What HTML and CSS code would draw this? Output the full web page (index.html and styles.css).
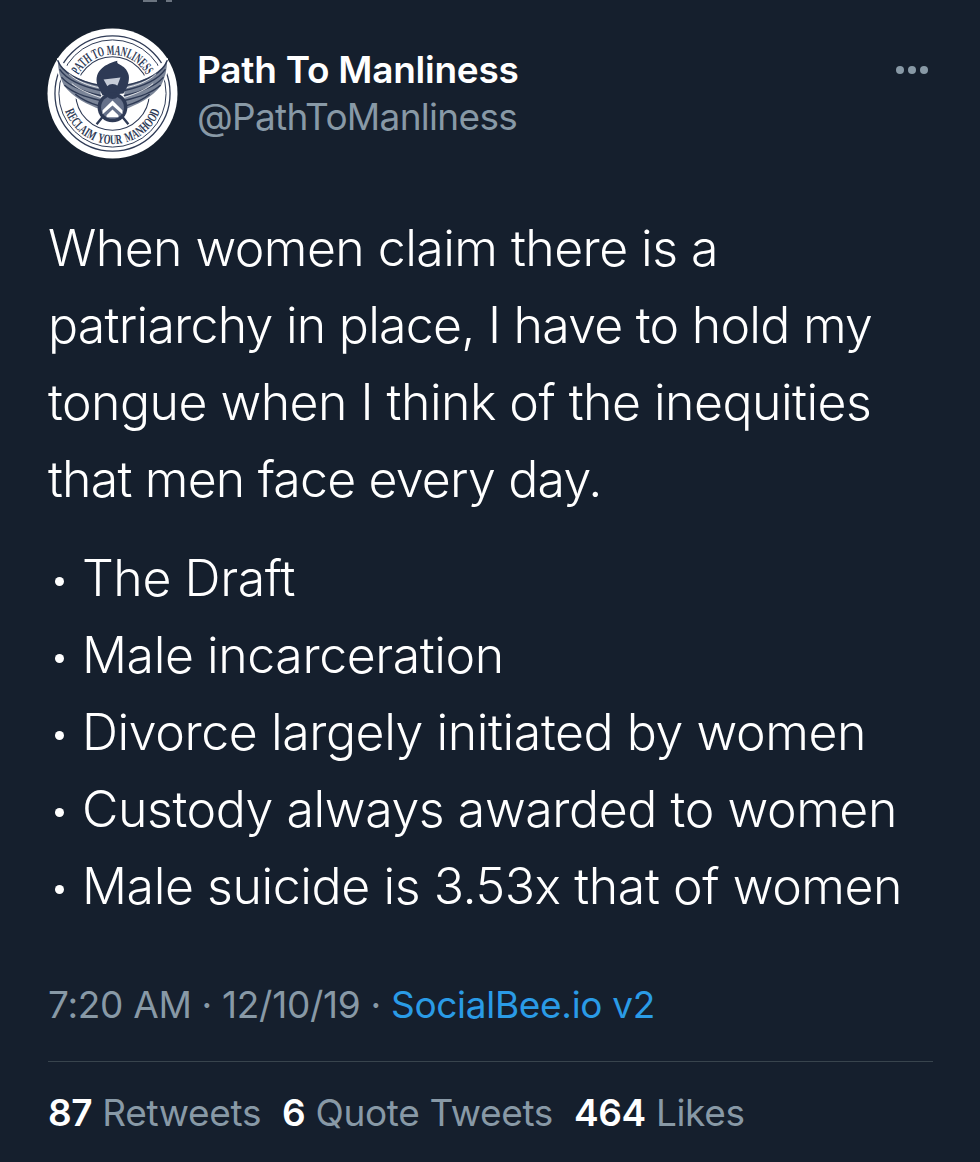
FILE: index.html
```html
<!DOCTYPE html>
<html lang="en">
<head>
<meta charset="utf-8">
<title>Tweet</title>
<link rel="stylesheet" href="styles.css">
</head>
<body>
<main class="tweet">
  <div class="status-sliver"><i></i><i></i></div>
  <header class="head">
    <svg class="avatar" viewBox="0 0 132 132" aria-label="Path To Manliness logo">
      <defs>
        <path id="arcTop" d="M 27 66 A 39 39 0 0 1 105 66"/>
        <path id="arcBot" d="M 15 66 A 51 51 0 0 0 117 66"/>
      </defs>
      <circle cx="66" cy="66" r="65.5" fill="#fff"/>
      <g fill="none" stroke="#2e3a55">
        <circle cx="66" cy="66" r="58" stroke-width="1.3"/>
        <circle cx="66" cy="66" r="54" stroke-width="1"/>
        <circle cx="66" cy="66" r="37" stroke-width="1.1"/>
      </g>
      <text class="logo-text"><textPath href="#arcTop" startOffset="50%" text-anchor="middle" textLength="84" lengthAdjust="spacingAndGlyphs">PATH TO MANLINESS</textPath></text>
      <text class="logo-text logo-text-low"><textPath href="#arcBot" startOffset="50%" text-anchor="middle" textLength="124" lengthAdjust="spacingAndGlyphs">RECLAIM YOUR MANHOOD</textPath></text>
      <g fill="#fff">
        <path d="M10 30 L30 46 L52 56 L56 88 L40 79 L18 63 L11 46 Z"/>
        <path d="M122 30 L102 46 L80 56 L76 88 L92 79 L114 63 L121 46 Z"/>
      </g>
      <g fill="#7b8598">
        <path d="M11 33 C18 46 36 54 54 58 L54 82 C42 78 26 70 17 58 C13 50 11 42 11 33 Z"/>
        <path d="M121 33 C114 46 96 54 78 58 L78 82 C90 78 106 70 115 58 C119 50 121 42 121 33 Z"/>
      </g>
      <g fill="none" stroke="#2e3a55" stroke-linecap="round" stroke-width="1.5">
        <path d="M11 33 C15 45 32 54 54 58"/>
        <path d="M13 42 C19 51 34 59 54 63"/>
        <path d="M15 50 C23 59 36 64 54 68"/>
        <path d="M18 58 C27 66 40 70 54 73"/>
        <path d="M29 67 C36 73 44 76 54 79"/>
        <path d="M121 33 C117 45 100 54 78 58"/>
        <path d="M119 42 C113 51 98 59 78 63"/>
        <path d="M117 50 C109 59 96 64 78 68"/>
        <path d="M114 58 C105 66 92 70 78 73"/>
        <path d="M103 67 C96 73 88 76 78 79"/>
      </g>
      <g fill="none" stroke="#fff" stroke-width="0.8">
        <path d="M22 46 C30 54 42 58 54 60.500"/>
        <path d="M25 56 C32 62 42 66 54 70"/>
        <path d="M110 46 C102 54 90 58 78 60.500"/>
        <path d="M107 56 C100 62 90 66 78 70"/>
      </g>
      <path d="M50 97 L59 86 M82 97 L73 86" stroke="#2e3a55" stroke-width="2.4" fill="none"/>
      <path d="M51 58 C47 46 55 37 71 33 C69 37 78 37 81 44 C84 49 82 55 81 59 L77 66 L56 68 Z" fill="#2e3a55"/>
      <path d="M57 52 L74 50 L71 58 L61 59 Z" fill="#c6ccd8"/>
      <circle cx="66" cy="80" r="15" fill="#2e3a55"/>
      <circle cx="66" cy="80" r="11.5" fill="#66718a"/>
      <path d="M56 83 L66 73 L76 83 L76 87 L66 78 L56 87 Z" fill="#fff"/>
      <path d="M60 88 L66 82 L72 88 L72 90 L60 90 Z" fill="#fff"/>
      <circle cx="66" cy="64" r="6" fill="none" stroke="#2e3a55" stroke-width="3.2"/>
    </svg>
    <div class="names">
      <div class="name">Path To Manliness</div>
      <div class="handle">@PathToManliness</div>
    </div>
    <div class="more" aria-label="More"><i></i><i></i><i></i></div>
  </header>
  <p class="body-text"><span class="line-a">When women claim there is a</span><br><span class="line-b">patriarchy in place, I have to hold my</span><br><span class="line-c">tongue when I think of the inequities</span><br><span class="line-d">that men face every day.</span></p>
  <ul class="list">
    <li>The Draft</li>
    <li>Male incarceration</li>
    <li>Divorce largely initiated by women</li>
    <li>Custody always awarded to women</li>
    <li>Male suicide is 3.53x that of women</li>
  </ul>
  <div class="meta">7:20 AM · 12/10/19 · <a class="source">SocialBee.io v2</a></div>
  <div class="stats">
    <span><b>87</b> Retweets</span>
    <span><b>6</b> Quote Tweets</span>
    <span><b>464</b> Likes</span>
  </div>
</main>
</body>
</html>
```

FILE: styles.css
```css
* { box-sizing: border-box; }
html, body { margin: 0; padding: 0; }
body {
  width: 980px;
  height: 1162px;
  overflow: hidden;
  background: #151f2d;
  color: #fff;
  font-family: Inter, "Liberation Sans", sans-serif;
}
.tweet { padding: 0 47px; position: relative; height: 1162px; }
.status-sliver { position: absolute; left: 143px; top: 0; display: flex; gap: 9px; }
.status-sliver i { display: block; width: 14px; height: 2px; background: #6b7480; }
.status-sliver i + i { width: 6px; }
.head { display: flex; align-items: flex-start; padding-top: 28px; }
.avatar { width: 131px; height: 131px; flex: none; }
.names { margin-left: 19px; padding-top: 18px; }
.name { font-size: 37px; font-weight: 600; line-height: 47px; letter-spacing: -0.25px; }
.handle { font-size: 37px; font-weight: 400; line-height: 48px; color: #8899a6; letter-spacing: -0.7px; }
.more { margin-left: auto; margin-right: 5px; margin-top: 38px; display: flex; gap: 4px; }
.more i { display: block; width: 8px; height: 8px; border-radius: 50%; background: #8899a6; }
.logo-text { font-family: "Liberation Serif", serif; font-size: 14px; font-weight: 700; fill: #2e3a55; }
.logo-text-low { font-size: 13.5px; word-spacing: 3px; }
.body-text {
  margin: 51px 0 0 1px;
  font-size: 50px;
  line-height: 77px;
  font-weight: 300;
}
.line-a { letter-spacing: -0.55px; }
.line-b { letter-spacing: -0.75px; }
.line-c { letter-spacing: -0.53px; }
.line-d { letter-spacing: -0.8px; }
.list { list-style: none; margin: 22px 0 0 1px; padding: 0; font-size: 50px; line-height: 77px; letter-spacing: -0.42px; font-weight: 300; }
.list li { display: flex; }
.list li::before {
  content: "";
  flex: none;
  width: 9px; height: 9px;
  border-radius: 50%;
  background: #fff;
  margin: 37px 18px 0 7px;
}
.meta { margin: 56px 0 0 1px; font-size: 37px; line-height: 48px; color: #8899a6; letter-spacing: -0.3px; padding-bottom: 32px; border-bottom: 1px solid #38444d; }
.source { color: #2a9be6; }
.stats { margin: 27px 0 0 1px; font-size: 37px; line-height: 48px; color: #8899a6; letter-spacing: -0.35px; display: flex; gap: 21px; }
.stats b { color: #fff; font-weight: 600; }
```
